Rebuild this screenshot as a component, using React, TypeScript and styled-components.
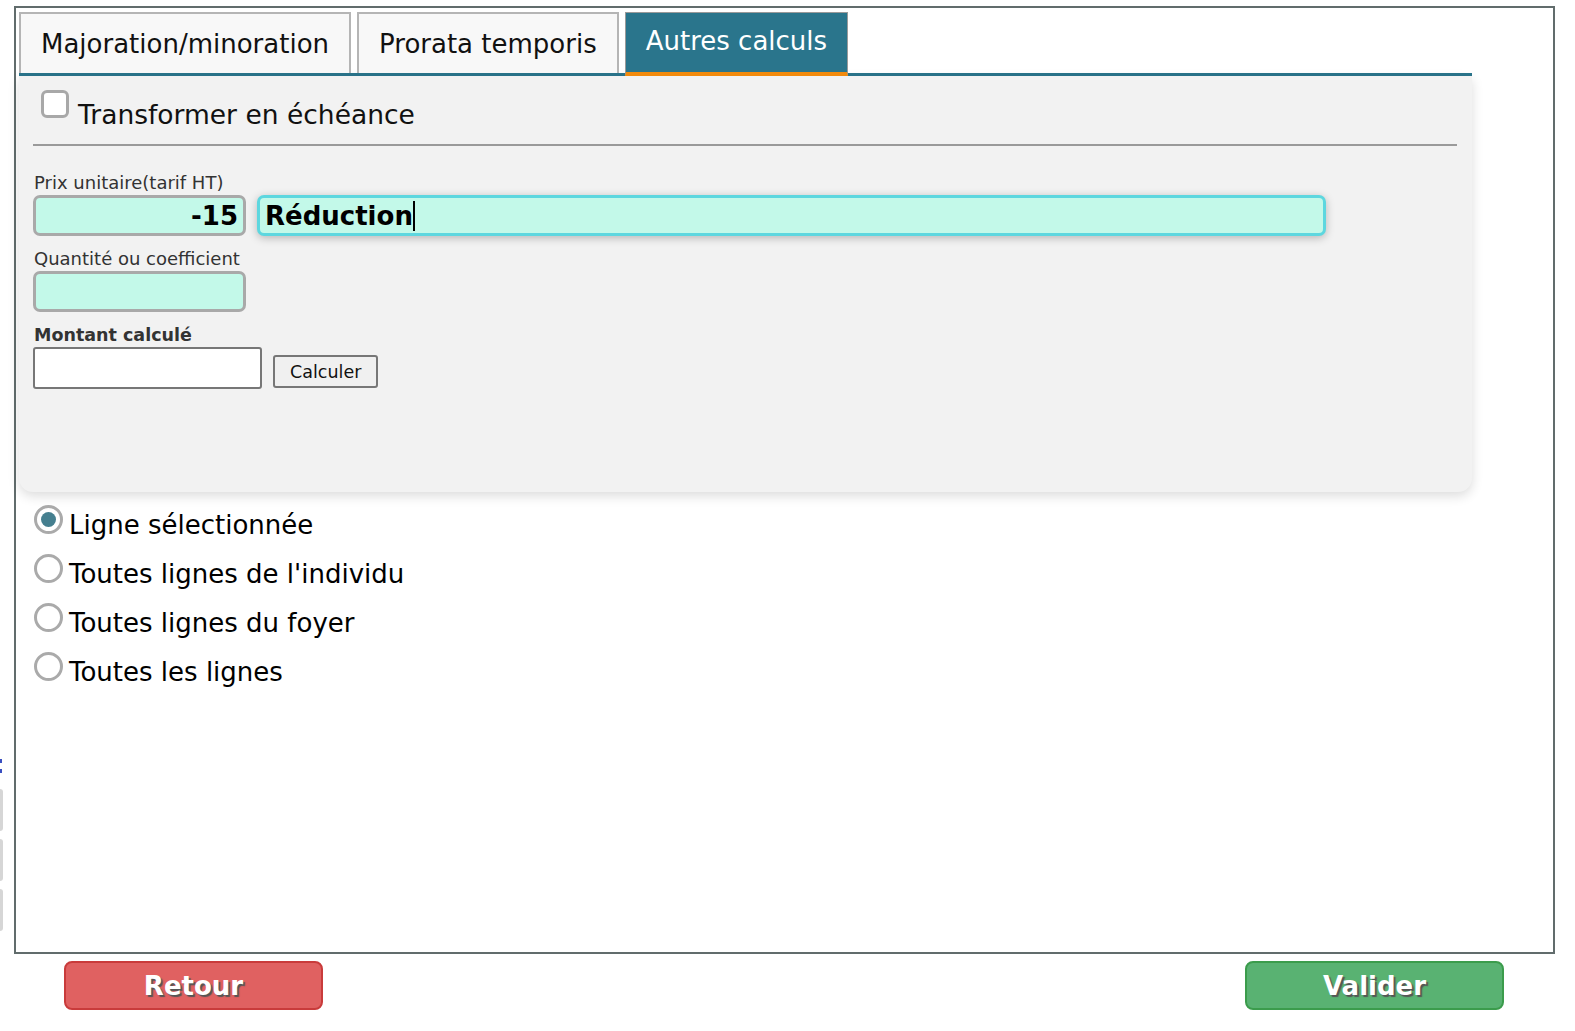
import { createGlobalStyle } from "styled-components";
import styled from "styled-components";

const GlobalStyle = createGlobalStyle`
  html, body {
    margin: 0;
    padding: 0;
    background: #ffffff;
    font-family: "DejaVu Sans", Verdana, sans-serif;
    color: #111;
  }
`;

const Frame = styled.div`
  position: relative;
  margin: 6px 0 0 14px;
  width: 1534px;
  height: 940px;
  border: 2px solid #616c6c;
  padding: 4px 0 0 3px;
  box-sizing: content-box;
`;

const Wrap = styled.div`
  width: 1453px;
`;

const TabBar = styled.div`
  display: flex;
  align-items: flex-end;
  gap: 6px;
  border-bottom: 3px solid #2a758c;
  height: 61px;
`;

const Tab = styled.div<{ $active?: boolean }>`
  box-sizing: border-box;
  height: ${(p) => (p.$active ? "64px" : "61px")};
  padding: 0 20px;
  display: flex;
  align-items: center;
  font-family: "DejaVu Sans", sans-serif;
  font-size: 26px;
  color: ${(p) => (p.$active ? "#ffffff" : "#111")};
  background: ${(p) => (p.$active ? "#2a758c" : "#f8f8f8")};
  border: ${(p) => (p.$active ? "1px solid #9a9a9a" : "2px solid #b5b5b5")};
  border-bottom: ${(p) => (p.$active ? "4px solid #f28a0c" : "none")};
  margin-bottom: ${(p) => (p.$active ? "-3px" : "0")};
  padding-bottom: ${(p) => (p.$active ? "4px" : "0")};
`;

const Panel = styled.div`
  background: #f2f2f2;
  height: 416px;
  border-radius: 0 0 14px 14px;
  box-shadow: 0 4px 12px rgba(0, 0, 0, 0.14);
  padding: 14px 15px 0 14px;
  box-sizing: border-box;
`;

const CheckRow = styled.label`
  display: flex;
  align-items: flex-start;
  gap: 9px;
  font-size: 26.5px;
  padding: 0 0 12px 8px;
  border-bottom: 2px solid #9a9a9a;
`;

const CheckBox = styled.span`
  width: 28px;
  height: 28px;
  border: 3px solid #a8a8a8;
  border-radius: 6px;
  background: #fff;
  box-sizing: border-box;
`;

const CheckText = styled.span`
  margin-top: 8px;
  line-height: 34px;
`;

const Fields = styled.div`
  padding-top: 24px;
  display: flex;
  flex-direction: column;
`;

const FieldLabel = styled.div<{ $bold?: boolean }>`
  font-size: ${(p) => (p.$bold ? "17.5px" : "18px")};
  color: #333;
  font-weight: ${(p) => (p.$bold ? "bold" : "normal")};
  line-height: 22px;
  padding: 2px 0 0 1px;
  margin-bottom: 1px;
`;

const Row = styled.div`
  display: flex;
  align-items: flex-start;
  gap: 11px;
  margin-bottom: 10px;
`;

const GreenInput = styled.div<{ $width: number; $focus?: boolean; $align?: string }>`
  box-sizing: border-box;
  width: ${(p) => p.$width}px;
  height: 41px;
  background: #c3f9e9;
  border: 3px solid ${(p) => (p.$focus ? "#5dd7df" : "#a9a9a9")};
  border-radius: 7px;
  font-size: 26px;
  font-weight: bold;
  color: #000;
  display: flex;
  align-items: center;
  justify-content: ${(p) => p.$align || "flex-start"};
  padding: 0 5px;
  box-shadow: ${(p) => (p.$focus ? "0 2px 8px rgba(0,0,0,0.25)" : "none")};
`;

const Caret = styled.span`
  display: inline-block;
  width: 2px;
  height: 30px;
  background: #000;
`;

const PlainInput = styled.div`
  box-sizing: border-box;
  width: 229px;
  height: 42px;
  background: #fff;
  border: 2px solid #777;
  border-radius: 3px;
`;

const SmallButton = styled.button`
  height: 33px;
  margin-top: 8px;
  padding: 0 15px;
  background: #f0f0f0;
  border: 2px solid #777;
  border-radius: 3px;
  font-family: "DejaVu Sans", sans-serif;
  font-size: 17.5px;
  color: #111;
`;

const RadioList = styled.div`
  padding: 13px 0 0 15px;
  display: flex;
  flex-direction: column;
  gap: 11px;
`;

const RadioRow = styled.label`
  display: flex;
  align-items: flex-start;
  gap: 6px;
  font-size: 26px;
  line-height: 36px;
  color: #000;
`;

const RadioLabel = styled.span`
  padding-top: 2px;
`;

const RadioDot = styled.span<{ $checked?: boolean }>`
  width: 29px;
  height: 29px;
  box-sizing: border-box;
  border-radius: 50%;
  border: 3px solid #aaaaaa;
  background: #fff;
  display: flex;
  align-items: center;
  justify-content: center;
  &::after {
    content: "";
    width: 15px;
    height: 15px;
    border-radius: 50%;
    background: ${(p) => (p.$checked ? "#457f8f" : "transparent")};
  }
`;

const Footer = styled.div`
  display: flex;
  justify-content: space-between;
  padding: 7px 71px 0 64px;
`;

const BigButton = styled.button<{ $tone: "red" | "green" }>`
  width: 259px;
  height: 49px;
  border-radius: 8px;
  border: 2px solid ${(p) => (p.$tone === "red" ? "#c93b3b" : "#3b9c4c")};
  background: ${(p) => (p.$tone === "red" ? "#e06161" : "#59b272")};
  color: #fff;
  font-family: "DejaVu Sans", sans-serif;
  font-weight: bold;
  font-size: 26px;
  text-shadow: 2px 2px 1px #555;
`;

const SideMarks = styled.div`
  position: absolute;
  left: 0;
  top: 759px;
  width: 3px;
  display: flex;
  flex-direction: column;
  gap: 8px;
`;

const SideDots = styled.span`
  width: 2px;
  height: 16px;
  margin-bottom: 6px;
  background: repeating-linear-gradient(
    to bottom,
    #3a4fc0 0 4px,
    transparent 4px 10px
  );
`;

const SideTick = styled.span`
  width: 3px;
  height: 42px;
  border-radius: 0 3px 3px 0;
  background: #d6d6d6;
`;

export default function App() {
  return (
    <>
      <GlobalStyle />
      <SideMarks>
        <SideDots />
        <SideTick />
        <SideTick />
        <SideTick />
      </SideMarks>
      <Frame>
        <Wrap>
          <TabBar>
            <Tab>Majoration/minoration</Tab>
            <Tab>Prorata temporis</Tab>
            <Tab $active>Autres calculs</Tab>
          </TabBar>
          <Panel>
            <CheckRow>
              <CheckBox />
              <CheckText>Transformer en échéance</CheckText>
            </CheckRow>
            <Fields>
              <FieldLabel>Prix unitaire(tarif HT)</FieldLabel>
              <Row>
                <GreenInput $width={213} $align="flex-end">-15</GreenInput>
                <GreenInput $width={1069} $focus>
                  Réduction
                  <Caret />
                </GreenInput>
              </Row>
              <FieldLabel>Quantité ou coefficient</FieldLabel>
              <Row>
                <GreenInput $width={213} />
              </Row>
              <FieldLabel $bold>Montant calculé</FieldLabel>
              <Row>
                <PlainInput />
                <SmallButton>Calculer</SmallButton>
              </Row>
            </Fields>
          </Panel>
          <RadioList>
            <RadioRow>
              <RadioDot $checked />
              <RadioLabel>Ligne sélectionnée</RadioLabel>
            </RadioRow>
            <RadioRow>
              <RadioDot />
              <RadioLabel>Toutes lignes de l'individu</RadioLabel>
            </RadioRow>
            <RadioRow>
              <RadioDot />
              <RadioLabel>Toutes lignes du foyer</RadioLabel>
            </RadioRow>
            <RadioRow>
              <RadioDot />
              <RadioLabel>Toutes les lignes</RadioLabel>
            </RadioRow>
          </RadioList>
        </Wrap>
      </Frame>
      <Footer>
        <BigButton $tone="red">Retour</BigButton>
        <BigButton $tone="green">Valider</BigButton>
      </Footer>
    </>
  );
}
